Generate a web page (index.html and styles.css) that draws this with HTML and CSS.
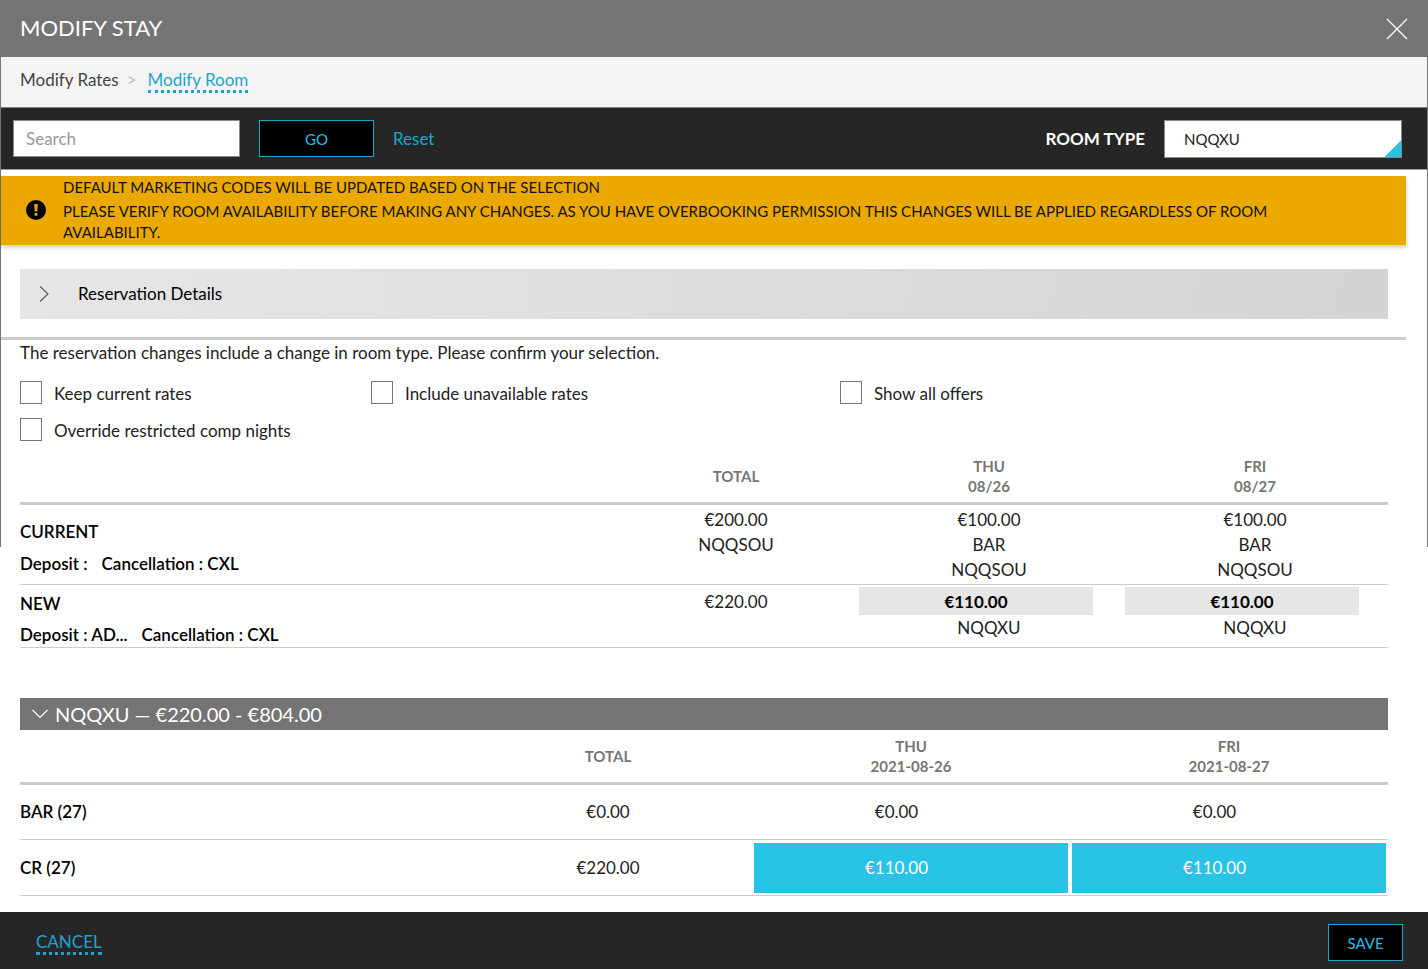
FILE: index.html
```html
<!DOCTYPE html>
<html lang="en">
<head>
<meta charset="utf-8">
<title>Modify Stay</title>
<link rel="stylesheet" href="styles.css">
</head>
<body>
<div class="dialog">
  <header class="titlebar">
    <h1 class="title">MODIFY STAY</h1>
    <button class="close" type="button" aria-label="Close">
      <svg width="22" height="22" viewBox="0 0 22 22" fill="none" stroke="currentColor" stroke-width="1.3"><path d="M1 1 21 21M21 1 1 21"/></svg>
    </button>
  </header>
  <nav class="crumbs">
    <span>Modify Rates</span>
    <span class="crumb-sep">&gt;</span>
    <a class="dotted" href="#">Modify Room</a>
  </nav>
  <div class="toolbar">
    <input class="search" type="text" placeholder="Search" aria-label="Search">
    <button class="btn btn-go" type="button">GO</button>
    <a class="reset" href="#">Reset</a>
    <label class="type-label" for="room-type">ROOM TYPE</label>
    <span class="type-box"><select class="type" id="room-type"><option>NQQXU</option></select></span>
  </div>
  <main class="content">
    <div class="alert">
      <svg class="alert-icon" width="20" height="20" viewBox="0 0 20 20"><circle cx="10" cy="10" r="10" fill="#000"/><path d="M8.200 4h3.600l-.6 7.600H8.800zM8.600 13h2.800v2.800H8.600z" fill="#eba900"/></svg>
      <div class="alert-text">
        <p>DEFAULT MARKETING CODES WILL BE UPDATED BASED ON THE SELECTION</p>
        <p>PLEASE VERIFY ROOM AVAILABILITY BEFORE MAKING ANY CHANGES. AS YOU HAVE OVERBOOKING PERMISSION THIS CHANGES WILL BE APPLIED REGARDLESS OF ROOM AVAILABILITY.</p>
      </div>
    </div>
    <button class="accordion" type="button">
      <svg width="10" height="18" viewBox="0 0 10 18" fill="none" stroke="#555" stroke-width="1.1"><path d="M1 1.500 9 9 1 16.500"/></svg>
      <span>Reservation Details</span>
    </button>
    <section class="details">
      <p class="notice">The reservation changes include a change in room type. Please confirm your selection.</p>
      <div class="checks">
        <label class="check"><input type="checkbox"><span>Keep current rates</span></label>
        <label class="check"><input type="checkbox"><span>Include unavailable rates</span></label>
        <label class="check"><input type="checkbox"><span>Show all offers</span></label>
        <label class="check"><input type="checkbox"><span>Override restricted comp nights</span></label>
      </div>
      <table class="grid compare">
        <colgroup><col><col class="c-total"><col class="c-day"><col class="c-day"></colgroup>
        <thead>
          <tr><td></td><th scope="col">TOTAL</th><th scope="col">THU<br>08/26</th><th scope="col">FRI<br>08/27</th></tr>
        </thead>
        <tbody>
          <tr class="row-current">
            <th class="plan" scope="row"><div class="plan-name">CURRENT</div><div class="terms"><span>Deposit :</span><span>Cancellation : CXL</span></div></th>
            <td>€200.00<br>NQQSOU</td>
            <td>€100.00<br>BAR<br>NQQSOU</td>
            <td>€100.00<br>BAR<br>NQQSOU</td>
          </tr>
          <tr class="row-new">
            <th class="plan" scope="row"><div class="plan-name">NEW</div><div class="terms"><span>Deposit : AD...</span><span>Cancellation : CXL</span></div></th>
            <td><div class="amount">€220.00</div></td>
            <td><div class="amount picked">€110.00</div>NQQXU</td>
            <td><div class="amount picked">€110.00</div>NQQXU</td>
          </tr>
        </tbody>
      </table>
      <button class="group" type="button">
        <svg width="16" height="10" viewBox="0 0 16 10" fill="none" stroke="currentColor" stroke-width="1.2"><path d="M.5 1 8 8.500 15.500 1"/></svg>
        <span>NQQXU — €220.00 - €804.00</span>
      </button>
      <table class="grid rates">
        <colgroup><col><col class="r-total"><col class="r-day"><col class="r-day"></colgroup>
        <thead>
          <tr><td></td><th scope="col">TOTAL</th><th scope="col">THU<br>2021-08-26</th><th scope="col">FRI<br>2021-08-27</th></tr>
        </thead>
        <tbody>
          <tr><th class="plan" scope="row">BAR (27)</th><td>€0.00</td><td><div class="rate">€0.00</div></td><td><div class="rate">€0.00</div></td></tr>
          <tr><th class="plan" scope="row">CR (27)</th><td>€220.00</td><td><div class="rate selected">€110.00</div></td><td><div class="rate selected">€110.00</div></td></tr>
        </tbody>
      </table>
    </section>
  </main>
  <footer class="footer">
    <a class="dotted" href="#">CANCEL</a>
    <button class="btn btn-save" type="button">SAVE</button>
  </footer>
</div>
</body>
</html>
```
FILE: styles.css
```css
* { box-sizing: border-box; }

body {
  margin: 0;
  background: #fff;
  color: #222;
  font: 400 17px/24px Lato, "Open Sans", sans-serif;
}

h1, p { margin: 0; }

button, input, select { font: inherit; border-radius: 0; margin: 0; }

button { cursor: pointer; }

a { color: #1ba5cc; text-decoration: none; }

.dialog {
  display: flex;
  flex-direction: column;
  min-height: 100vh;
  background: linear-gradient(#747474, #747474) left top / 1px 547px no-repeat,
              linear-gradient(#747474, #747474) right top / 1px 547px no-repeat;
}

.titlebar {
  display: flex;
  align-items: center;
  justify-content: space-between;
  height: 57px;
  padding: 0 20px;
  background: #747474;
  color: #fff;
}

.title { font-size: 22px; font-weight: 400; line-height: 28px; padding-bottom: 2px; }

.close {
  display: flex;
  padding: 0;
  border: 0;
  background: none;
  color: #fff;
}

.crumbs {
  display: flex;
  align-items: flex-start;
  height: 51px;
  margin: 0 1px;
  padding: 11px 19px 0;
  border-bottom: 1px solid #808080;
  background: #f4f4f4;
  color: #444;
}

.crumb-sep { margin: 0 11px 0 8px; color: #bbb; }

.dotted { line-height: 20px; padding-top: 2px; border-bottom: 3px dotted #1ba5cc; }

.toolbar {
  display: flex;
  align-items: center;
  height: 62px;
  margin: 0 1px;
  padding: 0 25px 0 12px;
  border-bottom: 1px solid #999;
  background: #262626;
}

.search {
  width: 227px;
  height: 37px;
  padding: 0 12px;
  border: 1px solid #888;
  background: #fff;
}

.search::placeholder { color: #999; opacity: 1; }

.btn {
  height: 37px;
  padding: 0;
  border: 1px solid #1ba5cc;
  background: #000;
  color: #29bde0;
  font-size: 15px;
}

.btn-go { width: 115px; margin: 0 19px; }

.type-label { margin-left: auto; margin-right: 19px; color: #fff; font-weight: 700; }

.type-box { position: relative; display: block; }

.type-box::after {
  content: "";
  position: absolute;
  right: 1px;
  bottom: 1px;
  width: 16px;
  height: 16px;
  background: linear-gradient(135deg, transparent 50%, #29c3e6 50%);
  pointer-events: none;
}

.type {
  display: block;
  width: 238px;
  height: 38px;
  padding: 0 19px;
  appearance: none;
  border: 1px solid #888;
  background: #fff;
  color: #222;
  font-size: 15px;
}

.content { flex: 1; padding: 6px 22px 0 1px; }

.alert {
  display: flex;
  align-items: center;
  min-height: 69px;
  padding: 1px 120px 2px 25px;
  background: #eba900;
  box-shadow: 0 3px 4px rgba(0, 0, 0, .18);
  color: #111;
  font-size: 15px;
  line-height: 21px;
}

.alert-icon { flex: none; margin-right: 17px; }

.alert-text { display: grid; gap: 3px; }

.accordion {
  display: flex;
  align-items: center;
  gap: 29px;
  width: calc(100% - 37px);
  height: 50px;
  margin: 24px 18px 18px 19px;
  padding: 0 19px;
  border: 0;
  background: linear-gradient(100deg, #e6e6e6, #d4d4d4);
  color: #000;
}

.details { padding: 0 18px 16px 19px; border-top: 3px solid #ccc; }

.notice { line-height: 25px; }

.checks {
  display: grid;
  grid-template-columns: 351px 469px 1fr;
  row-gap: 12px;
  margin-top: 16px;
}

.check { display: flex; align-items: flex-start; gap: 12px; line-height: 25px; }

.check input {
  width: 22px;
  height: 23px;
  margin: 0;
  appearance: none;
  border: 1px solid #777;
  background: #fff;
}

.check input:checked { background: #29c3e6; }

.grid {
  width: 100%;
  border-collapse: collapse;
  table-layout: fixed;
  text-align: center;
}

.grid th, .grid td { padding: 0; vertical-align: top; }

.grid thead th {
  vertical-align: middle;
  color: #767676;
  font-size: 15px;
  font-weight: 700;
  line-height: 20px;
}

.grid thead tr { border-bottom: 3px solid #ccc; }

.grid tbody tr { border-bottom: 1px solid #ccc; }

.grid .plan { color: #000; font-weight: 600; text-align: left; }

.c-total { width: 240px; }
.c-day { width: 266px; }
.r-total { width: 288px; }
.r-day { width: 318px; }

.compare { margin-top: 6px; }

.compare thead tr { height: 54px; }

.compare thead th { padding-top: 2px; }

.compare tbody td { padding-top: 2px; line-height: 25px; }

.row-current { height: 81px; }
.row-new { height: 63px; }

.plan-name { line-height: 24px; }
.row-current .plan-name { padding-top: 15px; }
.row-new .plan-name { padding-top: 7px; }

.terms { display: flex; gap: 14px; margin-top: 8px; line-height: 24px; }
.row-new .terms { margin-top: 7px; }

.amount { height: 28px; line-height: 30px; }

.picked {
  margin: 0 29px 0 3px;
  background: #e6e6e6;
  color: #000;
  font-weight: 700;
}

.group {
  display: flex;
  align-items: center;
  gap: 7px;
  width: 100%;
  height: 32px;
  margin-top: 50px;
  padding: 0 12px;
  border: 0;
  background: #747474;
  color: #fff;
  font-size: 20px;
}

.rates thead tr { height: 54px; }

.rates tbody tr { height: 56px; }

.rates tbody th, .rates tbody td { vertical-align: middle; }

.rate {
  height: 50px;
  margin: 0 2px;
  padding-right: 29px;
  line-height: 50px;
}

.selected { background: #29c3e6; color: #fff; }

.footer {
  position: sticky;
  bottom: 0;
  display: flex;
  align-items: center;
  justify-content: space-between;
  height: 58px;
  padding: 3px 25px 0 36px;
  background: #262626;
}

.btn-save { width: 75px; }
```
